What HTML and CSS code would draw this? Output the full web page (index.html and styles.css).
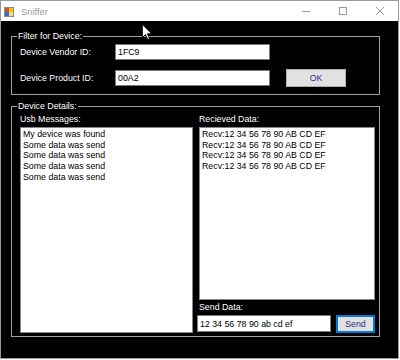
FILE: index.html
```html
<!DOCTYPE html>
<html lang="en">
<head>
    <meta charset="UTF-8">
    <meta name="viewport" content="width=device-width, initial-scale=1.0">
    <title>Sniffer</title>
    <link rel="stylesheet" href="styles.css">
</head>
<body>
    <div class="window">
        <div class="titlebar">
            <svg class="app-icon" width="10" height="10" viewBox="0 0 10 10">
                <rect x="0.5" y="0.5" width="9" height="9" fill="#d8d8d8" stroke="#8a8a8a"/>
                <rect x="1" y="1" width="4" height="4" fill="#e0502a"/>
                <rect x="5" y="1" width="4" height="4" fill="#f2c218"/>
                <rect x="1" y="5" width="4" height="4" fill="#2f6fd0"/>
                <rect x="5" y="5" width="4" height="4" fill="#f6e27a"/>
            </svg>
            <span class="title">Sniffer</span>
            <div class="caption-buttons">
                <span class="cap-btn">
                    <svg width="10" height="10" viewBox="0 0 10 10"><path d="M1 5.5H9" stroke="#9a9a9a" fill="none"/></svg>
                </span>
                <span class="cap-btn">
                    <svg width="10" height="10" viewBox="0 0 10 10"><rect x="1.5" y="1.5" width="7" height="7" stroke="#9a9a9a" fill="none"/></svg>
                </span>
                <span class="cap-btn">
                    <svg width="10" height="10" viewBox="0 0 10 10"><path d="M1 1L9 9M9 1L1 9" stroke="#9a9a9a" fill="none"/></svg>
                </span>
            </div>
        </div>

        <div class="client">
            <fieldset class="group filter-group">
                <legend>Filter for Device:</legend>
                <div class="filter-grid">
                    <label class="field-label">Device Vendor ID:</label>
                    <input type="text" class="textbox" value="1FC9">
                    <span></span>
                    <label class="field-label">Device Product ID:</label>
                    <input type="text" class="textbox" value="00A2">
                    <button class="btn ok-btn">OK</button>
                </div>
            </fieldset>

            <fieldset class="group details-group">
                <legend>Device Details:</legend>
                <div class="details-cols">
                    <div class="col usb-col">
                        <label class="list-label">Usb Messages:</label>
                        <div class="listbox usb-list">
                            <div>My device was found</div>
                            <div>Some data was send</div>
                            <div>Some data was send</div>
                            <div>Some data was send</div>
                            <div>Some data was send</div>
                        </div>
                    </div>
                    <div class="col data-col">
                        <label class="list-label">Recieved Data:</label>
                        <div class="listbox recv-list">
                            <div>Recv:12 34 56 78 90 AB CD EF</div>
                            <div>Recv:12 34 56 78 90 AB CD EF</div>
                            <div>Recv:12 34 56 78 90 AB CD EF</div>
                            <div>Recv:12 34 56 78 90 AB CD EF</div>
                        </div>
                        <label class="list-label send-label">Send Data:</label>
                        <div class="send-row">
                            <input type="text" class="textbox send-box" value="12 34 56 78 90 ab cd ef">
                            <button class="btn send-btn">Send</button>
                        </div>
                    </div>
                </div>
            </fieldset>
        </div>

        <!-- mouse pointer left over the client area -->
        <svg class="cursor" width="12" height="16" viewBox="0 0 12 19">
            <path d="M0.5 0.5V16L4.2 12.4L6.8 18.3L9 17.4L6.5 11.6H11.5Z" fill="#fff" stroke="#000"/>
        </svg>
    </div>
</body>
</html>
```

FILE: styles.css
```css
body {
    margin: 0;
    background: #fff;
    font-family: 'Liberation Sans', Arial, sans-serif;
    font-size: 8.8px;
}

.window {
    position: relative;
    width: 399px;
    height: 359px;
    box-sizing: border-box;
    border: 1px solid #9a9a9a;
    display: flex;
    flex-direction: column;
}

/* Title bar */
.titlebar {
    height: 20px;
    background: #fff;
    display: flex;
    align-items: center;
    padding-left: 3px;
}

.app-icon {
    display: block;
    margin-top: 1px;
}

.title {
    margin-left: 7px;
    font-size: 9.4px;
    color: #999;
}

.caption-buttons {
    margin-left: auto;
    display: flex;
    height: 100%;
}

.cap-btn {
    width: 37px;
    display: flex;
    align-items: center;
    justify-content: center;
}

.cap-btn svg {
    display: block;
}

/* Client area */
.client {
    flex: 1;
    background: #000;
    color: #fff;
    padding: 9px 0 0 10px;
}

.group {
    box-sizing: border-box;
    width: 369px;
    margin: 0;
    border: 1px solid #a0a0a0;
    padding: 2px 4px 0 8px;
}

.group legend {
    line-height: 12px;
    padding: 0 1px;
    margin-left: -3px;
    color: #fff;
}

.filter-group {
    padding-bottom: 7px;
}

.filter-grid {
    display: grid;
    grid-template-columns: 95px 155px 76px;
    grid-template-rows: 16px 19px;
    row-gap: 8px;
    align-items: center;
}

.field-label {
    color: #fff;
}

.textbox {
    box-sizing: border-box;
    height: 16px;
    margin: 0;
    padding: 0 2px;
    border: 1px solid #7a7a7a;
    background: #fff;
    color: #000;
    font: inherit;
    outline: none;
}

.btn {
    box-sizing: border-box;
    margin: 0;
    padding: 0;
    background: #e1e1e1;
    border: 1px solid #adadad;
    color: #2e2e8a;
    font: inherit;
}

.ok-btn {
    align-self: start;
    margin: 1px 0 0 16px;
    height: 18px;
}

.details-group {
    margin-top: 5px;
    padding-top: 0;
    padding-bottom: 3px;
}

.details-cols {
    display: flex;
    gap: 6px;
}

.col {
    display: flex;
    flex-direction: column;
}

.list-label {
    line-height: 15px;
    color: #fff;
}

.listbox {
    box-sizing: border-box;
    background: #fff;
    color: #000;
    border: 1px solid #828790;
    padding: 1px 2px;
    line-height: 10.7px;
}

.usb-list {
    width: 173px;
    height: 206px;
}

.recv-list {
    width: 176px;
    height: 173px;
}

.send-label {
    line-height: 15px;
}

.send-row {
    display: flex;
    gap: 5px;
    margin-left: -2px;
}

.send-box {
    width: 134px;
    height: 17px;
}

.send-btn {
    width: 39px;
    height: 18px;
    border: 2px solid #0078d7;
}

.cursor {
    position: absolute;
    left: 140px;
    top: 23px;
}
```
